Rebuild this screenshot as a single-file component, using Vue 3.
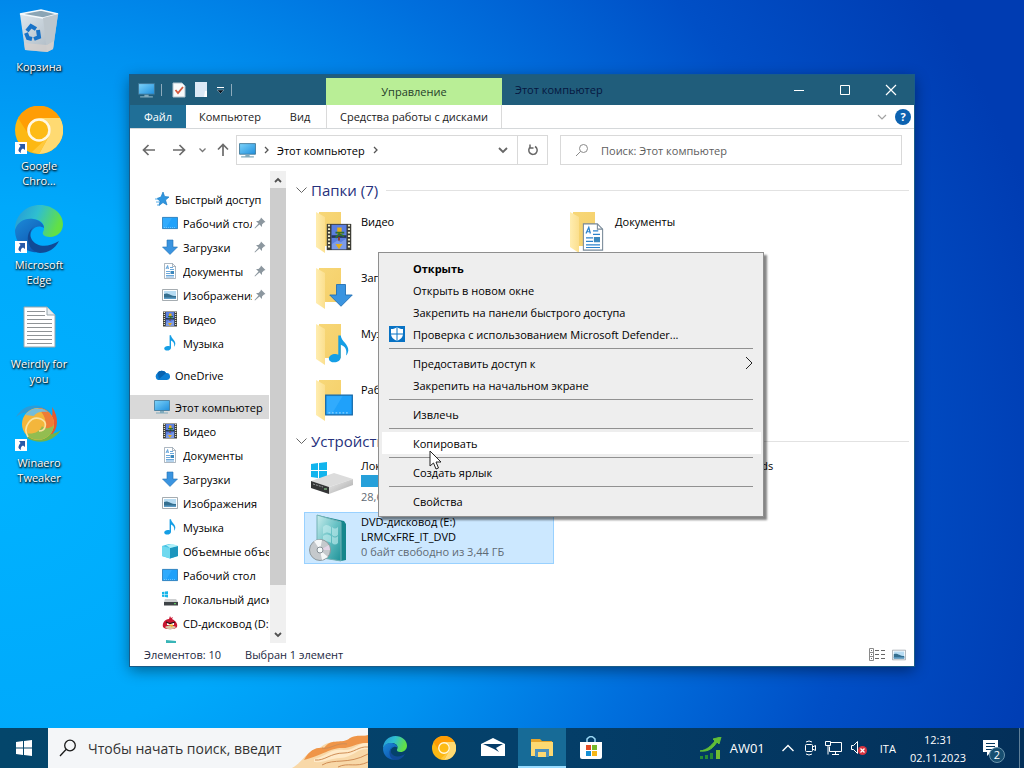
<script setup>
import { ref } from "vue";

const desktopIcons = [
  { id: "bin", label: "Корзина", icon: "bin" },
  { id: "chrome", label: "Google Chro...", icon: "chrome", shortcut: true },
  { id: "edge", label: "Microsoft Edge", icon: "edge", shortcut: true },
  { id: "note", label: "Weirdly for you", icon: "note" },
  { id: "winaero", label: "Winaero Tweaker", icon: "winaero", shortcut: true },
];

const navGroups = [
  {
    title: "Быстрый доступ",
    icon: "star",
    items: [
      { label: "Рабочий стол", icon: "screen", pinned: true },
      { label: "Загрузки", icon: "down", pinned: true },
      { label: "Документы", icon: "doc", pinned: true },
      { label: "Изображения", icon: "image", pinned: true },
      { label: "Видео", icon: "film" },
      { label: "Музыка", icon: "music" },
    ],
  },
  { title: "OneDrive", icon: "cloud", items: [] },
  {
    title: "Этот компьютер",
    icon: "pc",
    current: true,
    items: [
      { label: "Видео", icon: "film" },
      { label: "Документы", icon: "doc" },
      { label: "Загрузки", icon: "down" },
      { label: "Изображения", icon: "image" },
      { label: "Музыка", icon: "music" },
      { label: "Объемные объекты", icon: "cube" },
      { label: "Рабочий стол", icon: "screen" },
      { label: "Локальный диск (C:)", icon: "disk" },
      { label: "CD-дисковод (D:)", icon: "bird" },
      { label: "DVD-дисковод (E:)", icon: "dvd" },
    ],
  },
];

const folders = [
  { label: "Видео", icon: "film" },
  { label: "Документы", icon: "doc" },
  { label: "Загрузки", icon: "down" },
  { label: "Изображения", icon: "image" },
  { label: "Музыка", icon: "music" },
  { label: "Объемные объекты", icon: "cube" },
  { label: "Рабочий стол", icon: "screen" },
];

const drives = [
  { id: "C", lines: ["Локальный диск (C:)"], icon: "disk", used: 62, note: "28,6 ГБ свободно из 59,3 ГБ" },
  { id: "D", lines: ["DVD-дисковод (D:) Angry Birds"], icon: "bird" },
  { id: "E", lines: ["DVD-дисковод (E:)", "LRMCxFRE_IT_DVD"], icon: "dvd", note: "0 байт свободно из 3,44 ГБ" },
];

const selectedDrive = ref("E");

const menu = [
  [
    { label: "Открыть", bold: true },
    { label: "Открыть в новом окне" },
    { label: "Закрепить на панели быстрого доступа" },
    { label: "Проверка с использованием Microsoft Defender...", icon: "shield" },
  ],
  [{ label: "Предоставить доступ к", submenu: true }, { label: "Закрепить на начальном экране" }],
  [{ label: "Извлечь" }],
  [{ label: "Копировать" }],
  [{ label: "Создать ярлык" }],
  [{ label: "Свойства" }],
];

const hovered = ref("Копировать");

const apps = [
  { id: "edge", name: "Microsoft Edge" },
  { id: "chrome", name: "Google Chrome" },
  { id: "mail", name: "Почта" },
  { id: "explorer", name: "Проводник", active: true },
  { id: "store", name: "Microsoft Store" },
];
</script>

<template>
  <div class="shell">
    <svg class="sprite" width="0" height="0" aria-hidden="true">
      <defs>
        <linearGradient id="gScreen" x1="0" y1="0" x2="1" y2="1">
          <stop offset="0" stop-color="#7dd3fa" /><stop offset="1" stop-color="#1f8fdd" />
        </linearGradient>
        <linearGradient id="gEdgeTop" x1="0" y1="0" x2="1" y2="0.3">
          <stop offset="0" stop-color="#2496d8" /><stop offset="0.5" stop-color="#2fbfd0" /><stop offset="1" stop-color="#62e045" />
        </linearGradient>
        <linearGradient id="gEdgeLow" x1="0" y1="0" x2="0.7" y2="1">
          <stop offset="0" stop-color="#1c8ad8" /><stop offset="1" stop-color="#0d55b0" />
        </linearGradient>
        <linearGradient id="gFolder" x1="0" y1="0" x2="1" y2="1">
          <stop offset="0" stop-color="#f7d778" /><stop offset="1" stop-color="#f5cf68" />
        </linearGradient>
        <linearGradient id="gFlap" x1="0" y1="0" x2="1" y2="0">
          <stop offset="0" stop-color="#ffedb0" /><stop offset="1" stop-color="#fbdf8e" />
        </linearGradient>
        <linearGradient id="gBin" x1="0" y1="0" x2="1" y2="1">
          <stop offset="0" stop-color="#dfe9f0" /><stop offset="1" stop-color="#a7b3bd" />
        </linearGradient>
        <linearGradient id="gDvd" x1="0" y1="0" x2="1" y2="1">
          <stop offset="0" stop-color="#c9ecec" /><stop offset="0.5" stop-color="#68c2c5" /><stop offset="1" stop-color="#1f9298" />
        </linearGradient>
        <linearGradient id="gDisk" x1="0" y1="0" x2="1" y2="1">
          <stop offset="0" stop-color="#eeeeee" /><stop offset="1" stop-color="#a8a8a8" />
        </linearGradient>
      </defs>
      <symbol id="i-bin" viewBox="0 0 48 48">
        <path d="M5 7 26 3 43 7 38 42 32 45 10 43Z" fill="url(#gBin)" />
        <path d="M5 7 26 3 43 7 28 11Z" fill="#8ba5b5" stroke="#f4f9fc" stroke-width="1.4" />
        <path d="M28 11 43 7 38 42 32 45Z" fill="#bcc6cd" />
        <path d="M9 36 32 38 39 34 38 42 32 45 10 43Z" fill="#d8d2cd" opacity="0.700" />
        <g fill="none" stroke="#1873c8" stroke-width="4">
          <path d="M12 24 16 19 21 22" /><path d="M23 23 24 30 19 32" /><path d="M11 26 13 31 17 32" />
        </g>
      </symbol>
      <symbol id="i-chrome" viewBox="0 0 48 48">
        <circle cx="24" cy="24" r="24" fill="#fcb813" />
        <path d="M3 12A24 24 0 0 1 45 12H24L12 26Z" fill="#ff9d05" />
        <path d="M45 12A24 24 0 0 1 24 48L34 30 36 24 34 17 24 12Z" fill="#ffda72" />
        <path d="M34 30 24 48 17 46Z" fill="#ffc93c" />
        <circle cx="24" cy="24" r="10.5" fill="#fdbb16" stroke="#fff8e2" stroke-width="2.6" />
      </symbol>
      <symbol id="i-edge" viewBox="0 0 48 48">
        <path d="M0 25C0 10 11 0 25 0c13 0 23 9 23 19 0 8-6 13-13 13-6 0-8-3-7-5 3-5 0-12-9-13C9 13 3 18 0 25Z" fill="url(#gEdgeTop)" />
        <path d="M0 25C3 16 10 13 18 14c7 1 11 5 11 9-6-4-14 0-14 10 0 7 5 12 10 14C11 49 0 39 0 25Z" fill="url(#gEdgeLow)" />
        <path d="M20 21c-5 3-6 9-3 14 5 7 16 8 27 1-4 8-11 12-19 12-7-1-11-6-12-12-1-7 2-12 7-15Z" fill="#104a96" />
      </symbol>
      <symbol id="i-note" viewBox="0 0 48 48">
        <path d="M9 3h23l8 8v32H9Z" fill="#fff" stroke="#98a5ac" />
        <path d="M32 3v8h8" fill="#e7edf1" stroke="#98a5ac" />
        <path d="M12 7.500h18M12 11.500h18M12 15.500h25M12 19.500h25M12 23.500h25M12 27.500h25M12 31.500h25M12 35.500h25M12 39.500h25" stroke="#8f9396" />
      </symbol>
      <symbol id="i-winaero" viewBox="0 0 48 48">
        <path d="M1 14C9 0 26-1 36 10L30 17C22 9 11 6 1 14Z" fill="#2d9bd6" />
        <path d="M37 4c7 10 7 22-2 30L24 32C35 25 39 14 37 4Z" fill="#e5592f" />
        <path d="M46 27C38 39 24 42 12 35L22 26c6 7 15 7 24 1Z" fill="#72b448" />
        <circle cx="23" cy="21" r="16" fill="#f3b63c" />
        <path d="M23 5a16 16 0 0 1 16 16c-2 6-7 9-12 9 6-6 5-16-4-25Z" fill="#ee7c37" />
        <path d="M39 22a16 16 0 0 1-29 8c8 2 15-1 17-7 2 3 8 3 12-1Z" fill="#93bd50" />
        <path d="M10 12A16 16 0 0 1 33 9c-6-1-12 0-14 4Z" fill="#74bcd9" />
        <path d="M13 34c-6-10 3-22 13-18 7 3 5 12-2 12" fill="none" stroke="#fae3a0" stroke-width="1.600" />
      </symbol>
      <symbol id="i-star" viewBox="0 0 16 16">
        <path d="M9 1 10.600 5.500 15 6 11.500 9 13 14 9 11.500 5 14.500 6 10 3 7.500 7 6Z" fill="#2f96e0" stroke="#1c7cc4" stroke-width="0.7" />
        <path d="M1 8h3M2 11h3M3 14h2" stroke="#58aee8" />
      </symbol>
      <symbol id="i-screen" viewBox="0 0 16 16">
        <path d="M0.400 2.400h15.200v11.200H0.400Z" fill="#1fa1fa" stroke="#1267a8" stroke-width="0.700" />
        <path d="M1 3h9L4 13H1Z" fill="#43b6ff" opacity="0.500" />
        <path d="M2 12.500h12" stroke="#b4e3ff" stroke-width="0.500" stroke-dasharray="1 1" />
      </symbol>
      <symbol id="i-down" viewBox="0 0 16 16">
        <path d="M5 1h6v7h4.500L8 15.500 0.500 8H5Z" fill="#3a94e0" stroke="#2270b4" stroke-width="0.600" />
      </symbol>
      <symbol id="i-doc" viewBox="0 0 16 16">
        <path d="M2.500 0.500h8l3 3v12h-11Z" fill="#fff" stroke="#778897" stroke-width="0.600" />
        <path d="M10.500 0.500v3h3" fill="none" stroke="#778897" stroke-width="0.600" />
        <path d="M4 6 5.600 2.500 6.500 6M4.600 5h1.600M8 4.500h3M8 6.500h4M4 8.500h4M4 10.500h4M4 12.500h8M4 14h8" fill="none" stroke="#2b82cb" stroke-width="0.700" />
        <path d="M8.500 8h3.500v3H8.500Z" fill="#3c88bd" />
      </symbol>
      <symbol id="i-image" viewBox="0 0 16 16">
        <path d="M0.500 2.500h15v11h-15Z" fill="#fff" stroke="#8e979d" stroke-width="0.800" />
        <path d="M2 4h12v8H2Z" fill="#b7dcf3" />
        <path d="M2 7c4-2 6 2 12 2v3H2Z" fill="#356f8f" /><path d="M2 10.500h12V12H2Z" fill="#5d9cc5" />
      </symbol>
      <symbol id="i-film" viewBox="0 0 16 16">
        <path d="M1 0.500h14v15H1Z" fill="#3c3c34" /><path d="M3.700 1h8.600v14H3.700Z" fill="#5b7fe0" />
        <path d="M3.700 7h8.600v1.500H3.700Z" fill="#263562" /><path d="M4 12l3-2 2 1 3-2v6H4Z" fill="#7c9be8" />
        <path d="M7 2.500h2.500v4H7ZM6 12h4l-2 3Z" fill="#e3ad1b" /><path d="M6 5.500h5M6 8.500l2-2 3 1" stroke="#33702f" fill="none" />
        <path d="M8 8v2" stroke="#8f3a20" />
        <path d="M2.300 1v14M13.700 1v14" stroke="#f4f0cf" stroke-width="1.200" stroke-dasharray="1 1" />
      </symbol>
      <symbol id="i-music" viewBox="0 0 16 16">
        <path d="M7.600 0.300H9C9.300 3.500 13.600 5.500 13.300 8.800c-.1 1.300-.7 2.300-1.300 2.900C12.800 8.500 11.500 6.500 9 5.600V12.700c0 1.700-1.800 2.900-3.700 2.900S2.200 14.700 2.200 13.500c0-1.600 2-2.700 3.800-2.600.7 0 1.200.2 1.600.4Z" fill="#159ee5" />
      </symbol>
      <symbol id="i-cloud" viewBox="0 0 16 16">
        <path d="M4 13a4 4 0 0 1-.5-7A5 5 0 0 1 12 6a3.500 3.500 0 0 1 1 7Z" fill="#0d7fd5" />
        <path d="M3.500 6A5 5 0 0 1 12 6L5 12Z" fill="#0863b1" />
      </symbol>
      <symbol id="i-pc" viewBox="0 0 16 16">
        <path d="M0.500 1.500h15v10h-15Z" fill="url(#gScreen)" stroke="#3f7594" stroke-width="0.800" />
        <path d="M6 12h4v1.500h4v1H2v-1h4Z" fill="#80aabc" />
      </symbol>
      <symbol id="i-cube" viewBox="0 0 16 16">
        <path d="M0 3 7 1 16 3v10l-8 2.500L0 13Z" fill="#46c2e4" /><path d="M0 3 8 5v10.500L0 13Z" fill="#6fd9ef" />
        <path d="M8 5 16 3v10l-8 2.500Z" fill="#1c95bd" /><path d="M4 2 11 1l5 2-8 2Z" fill="#aff0f9" />
      </symbol>
      <symbol id="i-disk" viewBox="0 0 16 16">
        <path d="M0 1 2.500.7V3H0ZM3 .6 6 .2V3H3ZM0 3.500h2.500V6L0 5.700ZM3 3.500h3V6.500L3 6.100Z" fill="#16b5e9" />
        <path d="M3 8h11l2 3H2Z" fill="#cdcfd0" /><path d="M2 11h14v3.500H2Z" fill="#3e4346" /><path d="M12 12.700h2" stroke="#66e466" />
      </symbol>
      <symbol id="i-bird" viewBox="0 0 16 16">
        <path d="M7 4 8 1l1 2 2-1-1 2c4 2 6 5 5 8-2 3-12 3-14 0-1-4 2-8 6-8Z" fill="#c91631" />
        <path d="M3 12c3-2 8-2 11 0-2 3-9 3-11 0Z" fill="#dbc7a6" />
        <path d="M5 8h7v2H5Z" fill="#fff" /><path d="M4 7 8 8.500 13 7" fill="none" stroke="#281616" stroke-width="1.300" />
        <path d="M7 9.500h4l-1 3Z" fill="#f7b425" />
      </symbol>
      <symbol id="i-dvd" viewBox="0 0 16 16">
        <path d="M4 1 14 2v13L4 13Z" fill="#39b5b7" /><circle cx="5" cy="12" r="3.500" fill="#c5ced1" />
      </symbol>
      <symbol id="i-disk-big" viewBox="0 0 48 48">
        <path d="M2 6 9 5v7H2ZM10 5l8-1v8h-8ZM2 13h7v7l-7-1ZM10 13h8v8l-8-1Z" fill="#11b4ed" />
        <path d="M2 23 25 15 44 21 20 29Z" fill="#dcdcdc" />
        <path d="M2 23 20 29v7L2 30Z" fill="#343536" /><path d="M20 29 44 21v6L20 36Z" fill="url(#gDisk)" />
        <path d="M4 26 14 29" stroke="#979b9d" stroke-dasharray="2 1" /><path d="M15 31h3" stroke="#9ee89e" />
      </symbol>
      <symbol id="i-dvd-big" viewBox="0 0 48 48">
        <path d="M8 1 35 7 37 10v36l-5 1L8 43Z" fill="#15868c" />
        <path d="M8 1 32 8v39L8 43Z" fill="url(#gDvd)" stroke="#73b1b5" />
        <path d="M14 13c3-3 5-2 8 0v7c-3-2-5-2-8 0ZM23 13c2 2 4 2 6 0v8c-2 2-4 2-6 0ZM14 22c3-2 5-2 8 0v7c-3-2-5-2-8 0ZM23 22c2 2 4 2 6 0v7c-2 2-4 2-6 0Z" fill="#c6eef0" opacity="0.600" />
        <circle cx="11" cy="36" r="10.500" fill="#c5c9cc" stroke="#8d989d" />
        <path d="M11 36 5 27a12 12 0 0 1 8-1ZM11 36l8 7-6 3Z" fill="#f5f7f7" /><path d="M11 36 20 31l1 5Z" fill="#e3d4e5" />
        <circle cx="11" cy="36" r="3" fill="#f7fbfb" stroke="#879096" />
      </symbol>
      <symbol id="i-folder" viewBox="0 0 48 48">
        <path d="M10 5h22v34H10Z" fill="url(#gFolder)" />
        <path d="M7 5 16 10v36L7 40Z" fill="url(#gFlap)" />
      </symbol>
      <symbol id="i-shield" viewBox="0 0 16 16">
        <path d="M0 0h16v16H0Z" fill="#0872c4" />
        <path d="M2 3c3 0 4-.5 6-2 2 1.500 3 2 6 2v5c0 3-2 5-6 7-4-2-6-4-6-7Z" fill="#fff" /><path d="M8 1v14M2 8h12" stroke="#0872c4" />
      </symbol>
      <symbol id="i-pin" viewBox="0 0 12 12">
        <path d="M7 0.500 11.500 5 10 5.500 8 7.500 8 10 5.500 7.500 1 11.500 0.500 11 4.500 6.500 2 4H4.500L6.500 2Z" fill="#8c979f" />
      </symbol>
      <symbol id="i-mail" viewBox="0 0 24 24">
        <path d="M0 8 12 2l12 6v12H0Z" fill="#fff" /><path d="M2 8h20l-7 4 3 4-5-3Z" fill="#063d69" />
      </symbol>
      <symbol id="i-explorer" viewBox="0 0 24 24">
        <path d="M1 3h9l2 2h10v5H1Z" fill="#e6a52b" /><path d="M1 6h22v14H1Z" fill="#fcd972" />
        <path d="M5 13h14v8H5Z" fill="#4b91bd" /><path d="M8 16h8v5H8Z" fill="#fcd972" />
      </symbol>
      <symbol id="i-store" viewBox="0 0 24 24">
        <path d="M8 6V3q4-5 8 0v3" fill="none" stroke="#9bd8f5" stroke-width="1.500" />
        <path d="M1 6h22v15q0 2-2 2H3q-2 0-2-2Z" fill="#fff" />
        <path d="M7 9h5v5H7Z" fill="#e34b25" /><path d="M13 9h5v5h-5Z" fill="#76b82a" />
        <path d="M7 15h5v5H7Z" fill="#168fd4" /><path d="M13 15h5v5h-5Z" fill="#f5b617" />
      </symbol>
    </svg>

    <main class="desktop">
      <ul class="desktop-icons">
        <li v-for="item in desktopIcons" :key="item.id">
          <button class="desktop-icon">
            <span class="picture">
              <svg width="48" height="48"><use :href="`#i-${item.icon}`" /></svg>
              <svg v-if="item.shortcut" class="shortcut" width="12" height="12" viewBox="0 0 12 12">
                <path d="M0 0h12v12H0Z" fill="#fff" /><path d="M4 2h6v6L8 6.500Q5 8 6 11 1 9 5.500 4Z" fill="#285aa8" />
              </svg>
            </span>
            <span>{{ item.label }}</span>
          </button>
        </li>
      </ul>

      <section class="window" aria-label="Этот компьютер">
        <header class="titlebar">
          <div class="quick">
            <svg width="17" height="17"><use href="#i-pc" /></svg>
            <i class="divider"></i>
            <button aria-label="Свойства">
              <svg width="14" height="16" viewBox="0 0 14 16">
                <path d="M1 1h9l3 3v11H1Z" fill="#f7fafb" stroke="#b1c4cf" /><path d="M3.500 8 6 11 11 5" fill="none" stroke="#d3583e" stroke-width="1.800" />
              </svg>
            </button>
            <button aria-label="Новая папка">
              <svg width="14" height="16" viewBox="0 0 14 16"><path d="M1 0h12v15H1Z" fill="#dce9f6" /><path d="M11 9h2v6h-3Z" fill="#fff" /></svg>
            </button>
            <button aria-label="Настроить панель">
              <svg width="9" height="8" viewBox="0 0 9 8"><path d="M1 1.500h7" stroke="#fff" /><path d="M1 4h7L4.500 7.500Z" fill="#06131e" stroke="#a7bfce" stroke-width="0.500" /></svg>
            </button>
            <i class="divider"></i>
          </div>
          <div class="manage">Управление</div>
          <h1>Этот компьютер</h1>
          <div class="window-buttons">
            <button aria-label="Свернуть"><svg width="12" height="12" viewBox="0 0 12 12"><path d="M1 6.500h10" stroke="#fff" /></svg></button>
            <button aria-label="Развернуть"><svg width="12" height="12" viewBox="0 0 12 12"><path d="M1.500 1.500h9v9h-9Z" fill="none" stroke="#fff" /></svg></button>
            <button aria-label="Закрыть"><svg width="12" height="12" viewBox="0 0 12 12"><path d="M1 1l10 10M11 1 1 11" stroke="#fff" stroke-width="1.200" /></svg></button>
          </div>
        </header>

        <nav class="ribbon">
          <button class="file">Файл</button>
          <button class="tab-pc">Компьютер</button>
          <button class="tab-view">Вид</button>
          <button class="tab-tools">Средства работы с дисками</button>
          <span class="ribbon-end">
            <button aria-label="Развернуть ленту"><svg width="10" height="6" viewBox="0 0 10 6"><path d="M1 1l4 4 4-4" fill="none" stroke="#a2a2a2" stroke-width="1.200" /></svg></button>
            <button class="help" aria-label="Справка">?</button>
          </span>
        </nav>

        <div class="address-row">
          <button class="nav-button" aria-label="Назад"><svg width="14" height="12" viewBox="0 0 14 12"><path d="M13 6H2M6.500 1 1.500 6l5 5" fill="none" stroke="#6b6b6b" stroke-width="1.700" /></svg></button>
          <button class="nav-button" aria-label="Вперед"><svg width="14" height="12" viewBox="0 0 14 12"><path d="M1 6h11M7.500 1l5 5-5 5" fill="none" stroke="#6b6b6b" stroke-width="1.700" /></svg></button>
          <button class="nav-recent" aria-label="Последние"><svg width="7" height="6" viewBox="0 0 7 6"><path d="M0.500 1.500l3 3 3-3" fill="none" stroke="#777" stroke-width="1.300" /></svg></button>
          <button class="nav-up" aria-label="Вверх"><svg width="12" height="14" viewBox="0 0 12 14"><path d="M6 13V2M1 6.500l5-5 5 5" fill="none" stroke="#6b6b6b" stroke-width="1.700" /></svg></button>
          <div class="address">
            <svg width="17" height="17"><use href="#i-pc" /></svg>
            <svg width="5" height="8" viewBox="0 0 5 8"><path d="M1 1l3 3-3 3" fill="none" stroke="#555" stroke-width="1.300" /></svg>
            <a href="#">Этот компьютер</a>
            <svg width="5" height="8" viewBox="0 0 5 8"><path d="M1 1l3 3-3 3" fill="none" stroke="#555" stroke-width="1.300" /></svg>
            <button class="history" aria-label="Журнал"><svg width="10" height="7" viewBox="0 0 10 7"><path d="M1 1l4 4 4-4" fill="none" stroke="#666" stroke-width="1.800" /></svg></button>
            <button class="refresh" aria-label="Обновить">
              <svg width="12" height="12" viewBox="0 0 12 12"><path d="M8 2.500a4.200 4.200 0 1 1-4.500.3M3 0.500V4h3.500" fill="none" stroke="#666" stroke-width="1.500" /></svg>
            </button>
          </div>
          <label class="search">
            <svg width="14" height="14" viewBox="0 0 14 14"><circle cx="8.500" cy="5.500" r="4" fill="none" stroke="#8a8a8a" /><path d="M5.500 8.500 1 13" stroke="#8a8a8a" /></svg>
            <input type="text" placeholder="Поиск: Этот компьютер" aria-label="Поиск" />
          </label>
        </div>

        <div class="body">
          <nav class="tree">
            <ul v-for="group in navGroups" :key="group.title">
              <li>
                <a href="#" class="root" :class="{ current: group.current }">
                  <svg width="16" height="16"><use :href="`#i-${group.icon}`" /></svg>
                  <span>{{ group.title }}</span>
                </a>
              </li>
              <li v-for="item in group.items" :key="item.label">
                <a href="#">
                  <svg width="16" height="16"><use :href="`#i-${item.icon}`" /></svg>
                  <span>{{ item.label }}</span>
                  <svg v-if="item.pinned" class="pin" width="12" height="12"><use href="#i-pin" /></svg>
                </a>
              </li>
            </ul>
          </nav>
          <div class="scrollbar">
            <button aria-label="Вверх"><svg width="8" height="6" viewBox="0 0 8 6"><path d="M1 5l3-3 3 3" fill="none" stroke="#505050" stroke-width="1.800" /></svg></button>
            <i class="thumb"></i>
            <i class="track"></i>
            <button aria-label="Вниз"><svg width="8" height="6" viewBox="0 0 8 6"><path d="M1 1l3 3 3-3" fill="none" stroke="#505050" stroke-width="1.800" /></svg></button>
          </div>

          <div class="content">
            <h2>
              <svg width="11" height="7" viewBox="0 0 11 7"><path d="M0.500 0.500l5 5 5-5" fill="none" stroke="#666" /></svg>
              <span>Папки (7)</span>
            </h2>
            <div class="tiles">
              <button v-for="folder in folders" :key="folder.label" class="tile">
                <span class="tile-icon">
                  <svg width="48" height="48"><use href="#i-folder" /></svg>
                  <svg class="overlay" :class="folder.icon"><use :href="`#i-${folder.icon}`" /></svg>
                </span>
                <span class="tile-text folder-text">{{ folder.label }}</span>
              </button>
            </div>
            <h2>
              <svg width="11" height="7" viewBox="0 0 11 7"><path d="M0.500 0.500l5 5 5-5" fill="none" stroke="#666" /></svg>
              <span>Устройства и диски (3)</span>
            </h2>
            <div class="tiles">
              <button
                v-for="drive in drives"
                :key="drive.id"
                class="tile"
                :class="{ selected: selectedDrive === drive.id }"
                @click="selectedDrive = drive.id"
              >
                <span class="tile-icon">
                  <svg width="48" height="48"><use :href="drive.icon === 'bird' ? '#i-bird' : `#i-${drive.icon}-big`" /></svg>
                </span>
                <span class="tile-text">
                  <span v-for="line in drive.lines" :key="line">{{ line }}</span>
                  <span v-if="drive.used" class="usage"><i :style="{ width: drive.used + '%' }"></i></span>
                  <span v-if="drive.note" class="note">{{ drive.note }}</span>
                </span>
              </button>
            </div>
          </div>
        </div>

        <footer class="status">
          <span>Элементов: 10</span>
          <span>Выбран 1 элемент</span>
          <span class="views">
            <button aria-label="Таблица">
              <svg width="17" height="13" viewBox="0 0 17 13">
                <path d="M0.500 0.500h4v12h-4ZM0.500 4.500h4M0.500 8.500h4" fill="none" stroke="#8a8a8a" />
                <path d="M2 2.500h1M2 6.500h1M2 10.500h1M6 2.500h4M6 6.500h4M6 10.500h4M12 2.500h4M12 6.500h4M12 10.500h4" stroke="#666" />
              </svg>
            </button>
            <button aria-label="Крупные значки"><svg width="14" height="14"><use href="#i-image" /></svg></button>
          </span>
        </footer>
      </section>

      <div class="menu" role="menu">
        <ul v-for="(group, i) in menu" :key="i">
          <li v-for="item in group" :key="item.label">
            <button
              role="menuitem"
              :class="{ bold: item.bold, hovered: hovered === item.label }"
              @mouseenter="hovered = item.label"
            >
              <span class="menu-icon"><svg v-if="item.icon" width="16" height="16"><use :href="`#i-${item.icon}`" /></svg></span>
              <span>{{ item.label }}</span>
              <svg v-if="item.submenu" class="submenu" width="8" height="14" viewBox="0 0 8 14"><path d="M1 1l6 6-6 6" fill="none" stroke="#222" /></svg>
            </button>
          </li>
        </ul>
        <svg class="cursor" width="13" height="20" viewBox="0 0 13 20">
          <path d="M1 1v15l3.500-3 2.500 6 2.500-1-2.500-6H12Z" fill="#fff" stroke="#222" />
        </svg>
      </div>
    </main>

    <footer class="taskbar">
      <button class="start" aria-label="Пуск">
        <svg width="16" height="16" viewBox="0 0 16 16"><path d="M0 2 7 1v6.500H0ZM8 .9 16 0v7.500H8ZM0 8.500h7V15L0 14ZM8 8.500h8V16l-8-1Z" fill="#fff" /></svg>
      </button>
      <label class="task-search">
        <svg width="18" height="18" viewBox="0 0 18 18"><circle cx="11" cy="6.500" r="5.300" fill="none" stroke="#1a1a1a" stroke-width="1.300" /><path d="M7 10.500 1 17" stroke="#1a1a1a" stroke-width="1.300" /></svg>
        <input type="text" placeholder="Чтобы начать поиск, введит" aria-label="Поиск в Windows" />
        <svg class="doodle" width="76" height="34" viewBox="0 0 76 34">
          <path d="M0 34C10 29 14 17 28 14 38 4 48 11 57 5 65 0 70 3 76 1v33Z" fill="#f8d8a8" />
          <path d="M12 26C18 15 25 13 32 14 40 3 50 11 58 4 66 0 70 3 76 1v8C66 8 60 14 50 14 38 14 31 21 12 26Z" fill="#ef9548" />
          <path d="M22 25c13-3 16-11 30-9 12 0 14-8 24-7v6c-11-1-14 8-28 9-9 0-15 5-26 4Z" fill="#ffeac8" />
          <path d="M23 26c10 1 15-7 29-7 10 0 15-7 24-6M30 31c12-7 26 0 46-11M46 33c10-5 18 1 30-5M30 14c8 2 15-6 25-4" fill="none" stroke="#cf8d55" />
        </svg>
      </label>
      <div class="apps">
        <button v-for="app in apps" :key="app.id" :class="{ active: app.active }" :aria-label="app.name">
          <svg width="24" height="24"><use :href="`#i-${app.id}`" /></svg>
        </button>
      </div>
      <div class="tray">
        <button class="stock">
          <svg width="23" height="23" viewBox="0 0 23 23">
            <path d="M1 19h3v3H1ZM6 18h3v4H6ZM11 16h3v6h-3Z" fill="#268c37" /><path d="M17 13h4v9h-4Z" fill="#73bd31" />
            <path d="M1 14C10 15 14 11 18 5l2 2 2-7-8 2 2 2C12 9 8 13 1 14Z" fill="#61bd37" stroke="#61bd37" />
          </svg>
          <span>AW01</span>
        </button>
        <button aria-label="Показать скрытые значки"><svg width="14" height="8" viewBox="0 0 14 8"><path d="M1.500 7 7 1.500 12.500 7" fill="none" stroke="#fff" stroke-width="1.400" /></svg></button>
        <button aria-label="Собрание">
          <svg width="14" height="16" viewBox="0 0 14 16"><path d="M2.500 5.500q0-1 1-1h5q1 0 1 1v5q0 1-1 1h-5q-1 0-1-1ZM9.500 7 12.500 5.500v5L9.500 9M3 2q3-2 6 0M3 14q3 2 6 0" fill="none" stroke="#fff" /></svg>
        </button>
        <button aria-label="Сеть">
          <svg width="17" height="16" viewBox="0 0 17 16"><path d="M6 2.500h10.500v9H4.500v-5M10.500 11.500v3M7 14.500h7M.5 1.500h5v4h-5ZM3 5.500v9" fill="none" stroke="#fff" /></svg>
        </button>
        <button aria-label="Звук">
          <svg width="18" height="16" viewBox="0 0 18 16">
            <path d="M1.500 5.500h2l4-4v12l-4-4h-2Z" fill="none" stroke="#fff" /><circle cx="12.500" cy="10.500" r="4.500" fill="#d9333f" />
            <path d="M10.500 8.500l4 4M14.500 8.500l-4 4" stroke="#fff" stroke-width="1.300" />
          </svg>
        </button>
        <button class="lang">ITA</button>
        <button class="clock"><span>12:31</span><span>02.11.2023</span></button>
        <button class="notice" aria-label="Уведомления">
          <svg width="18" height="18" viewBox="0 0 18 18"><path d="M1 1h15v12H9l-4 4v-4H1Z" fill="#fff" /><path d="M4 4.500h9M4 7.500h9M4 10.500h6" stroke="#06385f" /></svg>
          <span class="badge">2</span>
        </button>
      </div>
    </footer>
  </div>
</template>

<style>
body {
  margin: 0;
}
</style>

<style scoped>
.shell {
  display: grid;
  grid-template-rows: 1fr 40px;
  min-height: 100vh;
  overflow: hidden;
  color: #000;
  font-family: "Open Sans", "Noto Sans", sans-serif;
  font-size: 11px;
  line-height: 15px;
  background: radial-gradient(ellipse 105% 125% at 0% 62%, #00b2ff 0%, #00a9fb 28%, #0092f0 45%, #006fdd 62%, #004fc6 80%, #003cb2 100%);
}

.sprite {
  position: absolute;
}

button {
  padding: 0;
  border: 0;
  background: none;
  color: inherit;
  font: inherit;
}

a {
  color: inherit;
  text-decoration: none;
}

ul {
  margin: 0;
  padding: 0;
  list-style: none;
}

svg {
  flex: none;
  display: block;
}

input {
  flex: 1;
  min-width: 0;
  padding: 0;
  border: 0;
  outline: 0;
  background: none;
  font: inherit;
}

.desktop {
  position: relative;
}

.desktop-icons {
  width: 78px;
  padding-top: 7px;
}

.desktop-icon {
  display: flex;
  flex-direction: column;
  align-items: center;
  gap: 4px;
  width: 100%;
  height: 99px;
  padding: 0 8px;
  color: #fff;
  text-align: center;
  text-shadow: 1px 1px 2px #000, 0 1px 2px #000000cc;
}

.picture {
  position: relative;
}

.shortcut {
  position: absolute;
  left: 0;
  bottom: 0;
}

/* explorer window */
.window {
  position: absolute;
  top: 75px;
  right: 110px;
  bottom: 62px;
  left: 130px;
  display: flex;
  flex-direction: column;
  background: #fff;
  box-shadow: 0 0 0 1px #1a5c88, 0 4px 14px #00000073;
}

.titlebar {
  display: flex;
  height: 30px;
  background: #205d7b;
}

.quick {
  display: flex;
  align-items: center;
  gap: 8px;
  box-sizing: border-box;
  width: 196px;
  padding-left: 8px;
}

.divider {
  width: 1px;
  height: 12px;
  margin: 0 2px 0 -2px;
  background: #8eabbc;
}

.manage {
  width: 176px;
  margin-top: 3px;
  background: #b9ee96;
  color: #26402a;
  line-height: 28px;
  text-align: center;
}

h1 {
  flex: 1;
  margin: 0;
  padding-left: 13px;
  color: #06173f;
  font-size: 11px;
  font-weight: 400;
  line-height: 30px;
}

.window-buttons {
  display: flex;
}

.window-buttons button {
  display: grid;
  place-items: center;
  width: 46px;
}

.ribbon {
  display: flex;
  height: 23px;
  border-bottom: 1px solid #d5d8da;
  color: #222;
}

.file {
  width: 56px;
  background: #206f97;
  color: #fff;
}

.tab-pc {
  width: 88px;
}

.tab-view {
  width: 52px;
}

.tab-tools {
  width: 176px;
  border: solid #dadada;
  border-width: 0 1px;
}

.ribbon-end {
  display: flex;
  align-items: center;
  gap: 8px;
  margin-left: auto;
  padding-right: 3px;
}

.help {
  width: 16px;
  height: 16px;
  border-radius: 50%;
  background: #0c62b0;
  color: #fff;
  font-weight: 700;
}

.address-row {
  display: flex;
  align-items: center;
  height: 42px;
  padding: 0 12px 0 4px;
}

.nav-button,
.nav-recent,
.nav-up {
  display: grid;
  place-items: center;
  width: 30px;
  height: 30px;
}

.nav-recent {
  width: 16px;
}

.nav-up {
  width: 26px;
}

.address {
  flex: 308;
  display: flex;
  align-items: center;
  gap: 8px;
  box-sizing: border-box;
  height: 30px;
  padding-left: 2px;
  border: 1px solid #d9d9d9;
}

.history {
  display: grid;
  place-items: center;
  width: 28px;
  height: 28px;
  margin-left: auto;
}

.refresh {
  display: grid;
  place-items: center;
  width: 30px;
  height: 28px;
  margin-left: -8px;
  border-left: 1px solid #d9d9d9;
}

.search {
  flex: 326;
  display: flex;
  align-items: center;
  gap: 12px;
  box-sizing: border-box;
  height: 30px;
  margin-left: 12px;
  padding-left: 14px;
  border: 1px solid #d9d9d9;
}

.search input::placeholder {
  color: #5d5d5d;
  opacity: 1;
}

.body {
  flex: 1;
  display: flex;
  min-height: 0;
}

.tree {
  width: 139px;
  padding-top: 16px;
  overflow: hidden;
}

.tree ul {
  margin-bottom: 8px;
}

.tree a {
  display: flex;
  align-items: center;
  gap: 5px;
  height: 24px;
  padding-left: 32px;
}

.tree .root {
  padding-left: 24px;
}

.tree .current {
  background: #d9d9d9;
}

.tree span {
  flex: 1;
  overflow: hidden;
  white-space: nowrap;
}

.pin {
  margin: 0 3px 0 -3px;
}

.scrollbar {
  display: flex;
  flex-direction: column;
  width: 16px;
  margin-left: 1px;
  background: #f0f0f0;
}

.scrollbar button {
  display: grid;
  place-items: center;
  height: 17px;
}

.thumb {
  flex: 397;
  background: #cdcdcd;
}

.track {
  flex: 41;
}

.content {
  flex: 1;
  min-width: 0;
  padding: 7px 5px 0 10px;
}

h2 {
  display: flex;
  align-items: center;
  gap: 4px;
  height: 24px;
  margin: 0 0 3px;
  color: #26317c;
  font-size: 15px;
  font-weight: 400;
}

h2::after {
  content: "";
  flex: 1;
  height: 1px;
  margin-left: 4px;
  background: #e2e2e2;
}

.tiles {
  display: grid;
  grid-template-columns: repeat(auto-fill, 250px);
  gap: 4px;
  margin: 0 0 4px 8px;
}

.tile {
  display: flex;
  gap: 4px;
  box-sizing: border-box;
  height: 52px;
  padding: 1px 0 0 4px;
  border: 1px solid transparent;
  text-align: left;
}

.selected {
  border-color: #99d1ff;
  background: #cce8ff;
}

.tile-icon {
  position: relative;
}

.overlay {
  position: absolute;
  right: 4px;
  bottom: 5px;
  width: 28px;
  height: 28px;
}

.overlay.down {
  width: 24px;
  height: 24px;
}

.tile-text {
  display: flex;
  flex-direction: column;
}

.folder-text {
  padding-top: 7px;
}

.usage {
  width: 184px;
  height: 12px;
  margin: 2px 0;
  background: #e6e6e6;
}

.usage i {
  display: block;
  height: 100%;
  background: #26a0da;
}

.note {
  color: #5f6a74;
}

.status {
  display: flex;
  gap: 24px;
  align-items: center;
  height: 23px;
  padding: 0 8px 0 14px;
  color: #1c2942;
}

.views {
  display: flex;
  align-items: center;
  gap: 6px;
  margin-left: auto;
}

/* context menu */
.menu {
  position: absolute;
  top: 252px;
  left: 378px;
  box-sizing: border-box;
  width: 386px;
  padding: 4px 2px 4px 3px;
  border: 1px solid #8f8f8f;
  background: #eee;
  box-shadow: 3px 3px 2px #0000007a;
}

.menu ul + ul::before {
  content: "";
  display: block;
  height: 1px;
  margin: 3px 8px 3px 7px;
  background: #919191;
}

.menu button {
  display: flex;
  align-items: center;
  gap: 8px;
  width: 100%;
  height: 22px;
  padding: 0 8px 0 7px;
}

.menu .hovered {
  background: #fff;
}

.menu .bold {
  font-weight: 700;
}

.menu-icon {
  width: 16px;
}

.submenu {
  margin-left: auto;
}

.cursor {
  position: absolute;
  top: 197px;
  left: 50px;
}

/* taskbar */
.taskbar {
  display: flex;
  background: linear-gradient(90deg, #04466b, #04406a 50%, #032f59);
  color: #fff;
}

.start {
  display: grid;
  place-items: center;
  width: 48px;
}

.task-search {
  position: relative;
  display: flex;
  align-items: center;
  gap: 11px;
  box-sizing: border-box;
  width: 320px;
  padding-left: 11px;
  background: #f4f6f8;
  font-size: 14px;
}

.task-search input::placeholder {
  color: #333;
  opacity: 1;
}

.doodle {
  position: absolute;
  right: 0;
  bottom: 0;
}

.apps {
  display: flex;
  gap: 1px;
  margin-left: 3px;
}

.apps button {
  display: grid;
  place-items: center;
  width: 48px;
}

.apps .active {
  background: #176b97;
  box-shadow: inset 0 -2px #99dcff;
}

.tray {
  display: flex;
  align-items: center;
  gap: 8px;
  margin-left: auto;
  padding-right: 4px;
}

.stock {
  display: flex;
  align-items: center;
  gap: 8px;
  margin-right: 8px;
  font-size: 13px;
}

.lang {
  margin: 0 6px 0 4px;
}

.clock {
  display: flex;
  flex-direction: column;
  gap: 3px;
  align-items: center;
}

.notice {
  position: relative;
  display: flex;
  align-items: flex-start;
  box-sizing: border-box;
  width: 38px;
  height: 40px;
  margin-left: 8px;
  padding-top: 11px;
  border-right: 1px solid #5f7f98;
}

.badge {
  position: absolute;
  top: 19px;
  left: 7px;
  box-sizing: border-box;
  width: 16px;
  height: 16px;
  border: 1px solid #6c95ad;
  border-radius: 50%;
  background: #174e70;
  line-height: 14px;
}
</style>
